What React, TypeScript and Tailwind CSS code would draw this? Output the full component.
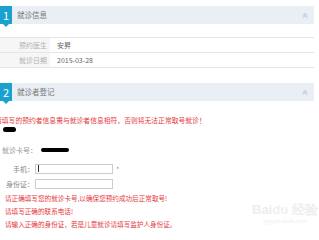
import React from 'react';

const font = { fontFamily: '"Noto Sans CJK SC", "Liberation Sans", sans-serif' };

const SectionHeader = ({ num, title }: { num: string; title: string }) => (
  <div className="relative flex h-[18px] w-[314px] items-center bg-[#e9eff4]">
    <div className="relative flex h-full w-[12px] items-center justify-center bg-[#1ba1cf] text-[11px] leading-none text-white">
      {num}
      <span className="absolute left-[3px] top-[18px] h-0 w-0 border-l-[3px] border-r-[3px] border-t-[3px] border-l-transparent border-r-transparent border-t-[#1ba1cf]" />
    </div>
    <span className="ml-[5px] text-[7.5px] text-[#777]">{title}</span>
    <svg className="absolute right-[6px] top-[6px]" width="6" height="6" viewBox="0 0 6 6">
      <path d="M1 3.5 L3 1.5 L5 3.5 M1 5.5 L3 3.5 L5 5.5" fill="none" stroke="#aab" strokeWidth="0.8" />
    </svg>
  </div>
);

const InfoRow = ({ label, value }: { label: string; value: string }) => (
  <div className="flex h-[15px] w-[314px] border-t border-[#e6e6e6]">
    <div className="flex w-[50px] items-center justify-end bg-[#f6f6f6] pr-[3px] text-[7px] text-[#b0b0b0]">{label}</div>
    <div className="flex items-center pl-[7px] text-[7px] text-[#666]">{value}</div>
  </div>
);

export default function App() {
  return (
    <div className="relative h-[240px] w-[319px] overflow-hidden bg-white" style={font}>
      <div className="pt-[6px]">
        <SectionHeader num="1" title="就诊信息" />
      </div>
      <div className="mt-[13px]">
        <InfoRow label="预约医生" value="安昇" />
        <InfoRow label="就诊日期" value="2015-03-28" />
        <div className="w-[314px] border-t border-[#e6e6e6]" />
      </div>
      <div className="mt-[15px]">
        <SectionHeader num="2" title="就诊者登记" />
      </div>
      <div className="mt-[14px] -ml-[5px] whitespace-nowrap text-[6.8px] leading-[10px] text-[#e4393c]">
        请填写的预约者信息需与就诊者信息相符，否则将无法正常取号就诊！
      </div>
      <div className="ml-[3px] mt-[2px] h-[5px] w-[13px] rounded-full bg-black" />
      <div className="mt-[13px] flex items-center pl-[2px] text-[7px] text-[#999]">
        <span>就诊卡号：</span>
        <span className="ml-[4px] h-[4px] w-[28px] rounded-full bg-black" />
      </div>
      <div className="mt-[8px] flex items-center">
        <span className="w-[35px] pr-[1px] text-right text-[7px] text-[#888]">手机：</span>
        <div className="flex h-[10px] w-[78px] items-center border border-[#ccc] pl-[2px]">
          <span className="h-[7px] w-px bg-[#333]" />
        </div>
        <span className="ml-[3px] text-[7px] text-[#999]">*</span>
      </div>
      <div className="mt-[5px] flex items-center">
        <span className="w-[35px] pr-[1px] text-right text-[7px] text-[#888]">身份证：</span>
        <div className="h-[10px] w-[78px] border border-[#ccc]" />
      </div>
      <div className="mt-[3px] flex flex-col gap-[3px] pl-[5px] text-[6.6px] leading-[10px] text-[#e4393c]">
        <span>请正确填写您的就诊卡号,以确保您预约成功后正常取号!</span>
        <span>请填写正确的联系电话!</span>
        <span>请输入正确的身份证，若是儿童就诊请填写监护人身份证。</span>
      </div>
      <div className="absolute left-[252px] top-[203px] flex flex-col items-center text-[#eeeeee]">
        <span className="text-[13px] font-bold leading-none" style={{ fontFamily: '"Liberation Sans", sans-serif' }}>Bai<span className="text-[#f0f0f0]">du</span> 经验</span>
        <span className="mt-[2px] text-[5px] leading-none">jingyan.baidu.com</span>
      </div>
    </div>
  );
}
